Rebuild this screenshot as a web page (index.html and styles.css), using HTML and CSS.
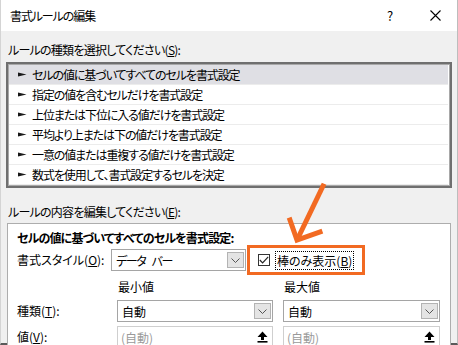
FILE: index.html
```html
<!DOCTYPE html>
<html lang="ja">
<head>
<meta charset="utf-8">
<link rel="stylesheet" href="styles.css">
</head>
<body>
<div class="win">
  <div class="titlebar">
    <span class="title">書式ルールの編集</span>
    <span class="help">?</span>
    <span class="close"><svg width="11" height="11" viewBox="0 0 11 11"><path d="M0.5 0.5 L10.5 10.5 M10.5 0.5 L0.5 10.5" stroke="#000" stroke-width="1.1" fill="none"/></svg></span>
  </div>
  <div class="content">
    <div class="lbl lbl-top">ルールの種類を選択してください(<u>S</u>):</div>
    <div class="listbox">
      <div class="row sel"><svg class="tri" width="9" height="5" viewBox="0 0 9 5"><path d="M0 0.6 L8.5 2.5 L0 4.4 Z" fill="#1a1a1a"/></svg><span>セルの値に基づいてすべてのセルを書式設定</span></div>
      <div class="row"><svg class="tri" width="9" height="5" viewBox="0 0 9 5"><path d="M0 0.6 L8.5 2.5 L0 4.4 Z" fill="#1a1a1a"/></svg><span>指定の値を含むセルだけを書式設定</span></div>
      <div class="row"><svg class="tri" width="9" height="5" viewBox="0 0 9 5"><path d="M0 0.6 L8.5 2.5 L0 4.4 Z" fill="#1a1a1a"/></svg><span>上位または下位に入る値だけを書式設定</span></div>
      <div class="row"><svg class="tri" width="9" height="5" viewBox="0 0 9 5"><path d="M0 0.6 L8.5 2.5 L0 4.4 Z" fill="#1a1a1a"/></svg><span>平均より上または下の値だけを書式設定</span></div>
      <div class="row"><svg class="tri" width="9" height="5" viewBox="0 0 9 5"><path d="M0 0.6 L8.5 2.5 L0 4.4 Z" fill="#1a1a1a"/></svg><span>一意の値または重複する値だけを書式設定</span></div>
      <div class="row"><svg class="tri" width="9" height="5" viewBox="0 0 9 5"><path d="M0 0.6 L8.5 2.5 L0 4.4 Z" fill="#1a1a1a"/></svg><span>数式を使用して、書式設定するセルを決定</span></div>
    </div>
    <div class="lbl lbl-edit">ルールの内容を編集してください(<u>E</u>):</div>
    <div class="panel">
      <div class="heading">セルの値に基づいてすべてのセルを書式設定:</div>
      <div class="style-row">
        <span class="field-label">書式スタイル(<u>O</u>):</span>
        <div class="combo combo-style"><span class="combo-text narrow">データ バー</span><span class="drop"><svg width="9" height="5" viewBox="0 0 9 5"><path d="M0.5 0.5 L4.5 4.5 L8.5 0.5" stroke="#555" fill="none"/></svg></span></div>
        <div class="highlight">
          <span class="checkbox"><svg width="10" height="8" viewBox="0 0 10 8"><path d="M0.8 4 L3.6 6.8 L9.2 0.8" stroke="#222" stroke-width="1.2" fill="none"/></svg></span>
          <span class="check-label">棒のみ表示(<u>B</u>)</span>
        </div>
      </div>
      <div class="grid">
        <span></span>
        <span class="col-head">最小値</span>
        <span class="col-head">最大値</span>
        <span class="field-label">種類(<u>T</u>):</span>
        <div class="combo"><span class="combo-text">自動</span><span class="drop"><svg width="9" height="5" viewBox="0 0 9 5"><path d="M0.5 0.5 L4.5 4.5 L8.5 0.5" stroke="#555" fill="none"/></svg></span></div>
        <div class="combo"><span class="combo-text">自動</span><span class="drop"><svg width="9" height="5" viewBox="0 0 9 5"><path d="M0.5 0.5 L4.5 4.5 L8.5 0.5" stroke="#555" fill="none"/></svg></span></div>
        <span class="field-label">値(<u>V</u>):</span>
        <div class="input"><span class="ph">(自動)</span><span class="up"><svg width="11" height="12" viewBox="0 0 11 12"><path d="M5.5 0.5 L10.5 6 L7 6 L7 9 L4 9 L4 6 L0.5 6 Z" fill="#000"/><rect x="0.5" y="10" width="10" height="1.6" fill="#000"/></svg></span></div>
        <div class="input"><span class="ph">(自動)</span><span class="up"><svg width="11" height="12" viewBox="0 0 11 12"><path d="M5.5 0.5 L10.5 6 L7 6 L7 9 L4 9 L4 6 L0.5 6 Z" fill="#000"/><rect x="0.5" y="10" width="10" height="1.6" fill="#000"/></svg></span></div>
      </div>
    </div>
  </div>
  <svg class="annot-arrow" width="458" height="345" viewBox="0 0 458 345">
    <g stroke="#f26a22" stroke-width="5" fill="none" stroke-linecap="square" stroke-linejoin="miter">
      <path d="M322 186 L297 238"/>
      <path d="M289 220 L296 240 L319 232"/>
    </g>
  </svg>
</div>
</body>
</html>
```

FILE: styles.css
```css
* { box-sizing: border-box; }
html, body { margin: 0; padding: 0; }
body {
  width: 458px;
  height: 345px;
  overflow: hidden;
  font-family: "Noto Sans CJK JP", "Noto Sans", sans-serif;
  font-size: 12px;
  color: #000;
  background: #f0f0f0;
}
u { text-decoration-thickness: 1px; text-underline-offset: 1px; }
.win {
  position: relative;
  width: 458px;
  height: 345px;
  border-left: 1px solid #d4d4d4;
  border-right: 1px solid #bdbdbd;
  border-bottom: 2px solid #5a5a5a;
  background: #f0f0f0;
  font-feature-settings: "palt";
  letter-spacing: 0;
}
.titlebar {
  height: 31px;
  background: #fff;
  display: flex;
  align-items: center;
  padding-left: 9px;
}
.title { flex: 1; font-size: 12px; letter-spacing: -1.1px; }
.help { width: 30px; font-size: 13px; }
.close { width: 40px; display: flex; justify-content: center; padding-right: 4px; }
.content { padding: 0 0 0 5px; }
.lbl { height: 18px; line-height: 18px; padding-left: 2px; letter-spacing: -0.75px; }
.lbl-top { margin-top: 10px; }
.listbox {
  margin-top: 3px;
  width: 446px;
  border: 2px solid #6f6f6f;
  box-shadow: inset 0 0 0 1px #a8a8a8;
  background: #fff;
  padding: 1px 2px 1px 1px;
}
.row {
  height: 20px;
  display: flex;
  align-items: center;
  border-bottom: 1px solid #ececec;
  padding-left: 9px;
  letter-spacing: -1.1px;
}
.row.sel { background: #dfdfe4; }
.tri { margin-right: 5px; flex: none; }
.lbl-edit { margin-top: 15px; }
.panel {
  margin-top: 2px;
  margin-left: 1px;
  width: 444px;
  height: 130px;
  background: #fff;
  border: 1px solid #adadad;
  border-bottom: none;
  padding: 5px 0 0 9px;
}
.heading { font-weight: bold; height: 18px; line-height: 18px; letter-spacing: -0.85px; }
.style-row {
  display: flex;
  align-items: center;
  height: 30px;
  margin-top: -2px;
}
.field-label { width: 94px; line-height: 16px; }
.combo {
  height: 22px;
  border: 1px solid #a5a5a5;
  display: flex;
  align-items: center;
  justify-content: space-between;
  padding: 0 1px 0 4px;
  background: #fff;
}
.combo-style { width: 135px; }
.combo-text.narrow { letter-spacing: -1.4px; word-spacing: 5px; }
.drop {
  width: 17px;
  height: 16px;
  background: #e4e4e4;
  border: 1px solid #b3b3b3;
  display: flex;
  align-items: center;
  justify-content: center;
}
.highlight {
  margin-left: 1px;
  width: 118px;
  height: 30px;
  border: 3px solid #f26a22;
  display: flex;
  align-items: center;
  padding-left: 8px;
}
.checkbox {
  width: 12px;
  height: 12px;
  border: 1px solid #333;
  display: flex;
  align-items: center;
  justify-content: center;
  margin-right: 5px;
}
.check-label {
  border: 1px dotted #000;
  padding: 0 1px;
  line-height: 17px;
}
.grid {
  display: grid;
  grid-template-columns: 90px 156px 157px;
  column-gap: 10px;
  row-gap: 4px;
  margin-top: 2px;
}
.col-head { height: 20px; line-height: 20px; padding-left: 1px; margin-bottom: -1px; }
.grid .field-label { align-self: center; }
.input {
  height: 22px;
  border: 1px solid #cfcfcf;
  display: flex;
  align-items: center;
  justify-content: space-between;
  padding: 0 1px 0 3px;
}
.ph { color: #9a9a9a; }
.up {
  width: 18px;
  height: 20px;
  display: flex;
  align-items: center;
  justify-content: center;
  background: #fff;
}
.annot-arrow { position: absolute; left: 0; top: 0; pointer-events: none; }
```
